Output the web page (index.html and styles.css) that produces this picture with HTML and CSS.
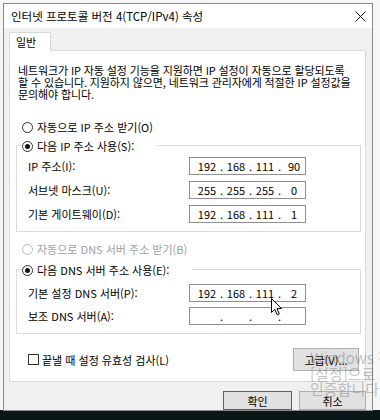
FILE: index.html
```html
<!DOCTYPE html>
<html lang="ko">

<head>
  <meta charset="UTF-8">
  <title>인터넷 프로토콜 버전 4(TCP/IPv4) 속성</title>
  <link rel="stylesheet" href="styles.css">
</head>

<body>
  <div class="dialog">
    <div class="titlebar">
      <span class="title">인터넷 프로토콜 버전 4(TCP/IPv4) 속성</span>
      <svg class="close" width="11" height="11" viewBox="0 0 11 11">
        <path d="M0.5 0.5 L10.5 10.5 M10.5 0.5 L0.5 10.5" stroke="#111" stroke-width="1" fill="none" />
      </svg>
    </div>

    <div class="body">
      <div class="tabs">
        <div class="tab">일반</div>
      </div>

      <div class="panel">
        <p class="desc">
          네트워크가 IP 자동 설정 기능을 지원하면 IP 설정이 자동으로 할당되도록<br>
          할 수 있습니다. 지원하지 않으면, 네트워크 관리자에게 적절한 IP 설정값을<br>
          문의해야 합니다.
        </p>

        <div class="radio-row first">
          <span class="radio"></span>
          <span>자동으로 IP 주소 받기(O)</span>
        </div>

        <div class="group group-ip">
          <div class="group-title">
            <span class="radio checked"></span>
            <span>다음 IP 주소 사용(S):</span>
          </div>
          <div class="fields">
            <label>IP 주소(I):</label>
            <div class="ip-box">
              <span class="seg">192</span><span class="dot">.</span><span class="seg">168</span><span class="dot">.</span><span class="seg">111</span><span class="dot">.</span><span class="seg">90</span>
            </div>
            <label>서브넷 마스크(U):</label>
            <div class="ip-box">
              <span class="seg">255</span><span class="dot">.</span><span class="seg">255</span><span class="dot">.</span><span class="seg">255</span><span class="dot">.</span><span class="seg">0</span>
            </div>
            <label>기본 게이트웨이(D):</label>
            <div class="ip-box">
              <span class="seg">192</span><span class="dot">.</span><span class="seg">168</span><span class="dot">.</span><span class="seg">111</span><span class="dot">.</span><span class="seg">1</span>
            </div>
          </div>
        </div>

        <div class="radio-row dns-auto disabled">
          <span class="radio"></span>
          <span>자동으로 DNS 서버 주소 받기(B)</span>
        </div>

        <div class="group group-dns">
          <div class="group-title">
            <span class="radio checked"></span>
            <span>다음 DNS 서버 주소 사용(E):</span>
          </div>
          <div class="fields">
            <label>기본 설정 DNS 서버(P):</label>
            <div class="ip-box">
              <span class="seg">192</span><span class="dot">.</span><span class="seg">168</span><span class="dot">.</span><span class="seg">111</span><span class="dot">.</span><span class="seg">2</span>
            </div>
            <label>보조 DNS 서버(A):</label>
            <div class="ip-box">
              <span class="seg"></span><span class="dot">.</span><span class="seg"></span><span class="dot">.</span><span class="seg"></span><span class="dot">.</span><span class="seg"></span>
            </div>
          </div>
        </div>

        <div class="check-row">
          <div class="check">
            <span class="checkbox"></span>
            <span>끝낼 때 설정 유효성 검사(L)</span>
          </div>
          <button class="btn advanced">고급(V)...</button>
        </div>
      </div>

      <div class="actions">
        <button class="btn ok">확인</button>
        <button class="btn">취소</button>
      </div>
    </div>
  </div>

  <!-- activation watermark over the dialog -->
  <div class="watermark">
    Windows 정품 인증<br>
    [설정]으로 이동하여 Windows를 정품<br>
    인증합니다.
  </div>

  <!-- mouse pointer -->
  <svg class="cursor" width="12" height="18" viewBox="0 0 12 18">
    <path d="M0.5 0.5 L0.5 14.5 L3.8 11.4 L6.2 16.8 L8.3 15.9 L6 10.6 L10.5 10.6 Z" fill="#fff" stroke="#000" stroke-width="1" stroke-linejoin="round" />
  </svg>
</body>

</html>
```

FILE: styles.css
```css
* {
  margin: 0;
  padding: 0;
  box-sizing: border-box;
}

body {
  width: 380px;
  height: 420px;
  overflow: hidden;
  position: relative;
  font-family: "Noto Sans CJK KR", "Noto Sans", sans-serif;
  font-size: 11px;
  line-height: 14px;
  color: #000;
  background: linear-gradient(to bottom, #f6f6f6 0, #f6f6f6 410px, #0b1619 410px);
}

.dialog {
  margin: 3px 0 0 3px;
  width: 370px;
  height: 408px;
  border: 1px solid #8a8a8a;
  background: #f0f0f0;
  display: flex;
  flex-direction: column;
}

.titlebar {
  height: 24px;
  background: #fff;
  display: flex;
  align-items: center;
  justify-content: space-between;
  padding: 0 6px 0 7px;
}

.title {
  font-size: 11.5px;
}

.body {
  padding: 4px 6px 0 5px;
}

.tabs {
  display: flex;
}

.tab {
  width: 42px;
  height: 19px;
  padding: 2px 0 0 6px;
  background: #fff;
  border: 1px solid #d9d9d9;
  border-bottom: none;
  margin-bottom: -1px;
  position: relative;
  z-index: 1;
}

.panel {
  height: 332px;
  background: #fff;
  border: 1px solid #d9d9d9;
  padding-top: 13px;
}

.desc {
  padding-left: 8px;
  line-height: 12px;
  letter-spacing: -0.12px;
  white-space: nowrap;
}

.radio-row {
  display: flex;
  align-items: center;
  gap: 4px;
  height: 14px;
  padding-left: 12px;
}

.radio-row.first {
  margin-top: 20px;
}

.radio-row.dns-auto {
  margin-top: 10px;
}

.disabled {
  color: #a0a0a0;
}

.radio {
  width: 11px;
  height: 11px;
  border: 1px solid #333;
  border-radius: 50%;
  background: #fff;
  display: flex;
  align-items: center;
  justify-content: center;
  flex-shrink: 0;
}

.disabled .radio {
  border-color: #bcbcbc;
}

.radio.checked::after {
  content: "";
  width: 5px;
  height: 5px;
  border-radius: 50%;
  background: #111;
}

.group {
  margin-left: 6px;
  width: 345px;
  border: 1px solid #dcdcdc;
  padding-bottom: 8px;
}

.group-ip {
  margin-top: 11px;
}

.group-dns {
  margin-top: 13px;
}

.group-title {
  display: flex;
  align-items: center;
  gap: 4px;
  width: fit-content;
  height: 14px;
  margin: -7px 0 0 5px;
  padding-right: 23px;
  background: #fff;
}

.fields {
  display: grid;
  grid-template-columns: 161px 117px;
  align-items: center;
  row-gap: 6px;
  padding-left: 11px;
}

.group-ip .fields {
  margin-top: 4px;
}

.group-dns .fields {
  margin-top: 7px;
  row-gap: 5px;
}

.ip-box {
  height: 18px;
  border: 1px solid #8f8f8f;
  display: flex;
  align-items: center;
  padding-left: 6px;
}

.seg {
  width: 22px;
  text-align: center;
}

.dot {
  width: 7px;
  text-align: center;
}

.check-row {
  display: flex;
  align-items: center;
  justify-content: space-between;
  margin-top: 14px;
  padding: 0 6px 0 18px;
}

.check {
  display: flex;
  align-items: center;
  gap: 3px;
}

.checkbox {
  width: 11px;
  height: 11px;
  border: 1px solid #333;
  background: #fff;
}

.btn {
  font: inherit;
  color: #000;
  background: #e1e1e1;
  border: 1px solid #adadad;
  height: 19px;
  width: 67px;
}

.btn.advanced {
  width: 66px;
  height: 23px;
}

.btn.ok {
  width: 69px;
  border-color: #0078d7;
}

.actions {
  display: flex;
  justify-content: flex-end;
  gap: 7px;
  margin-top: 9px;
}

.watermark {
  position: absolute;
  left: 310px;
  top: 350px;
  font-size: 15px;
  line-height: 15.5px;
  white-space: nowrap;
  color: rgba(110, 110, 110, 0.42);
}

.cursor {
  position: absolute;
  left: 271px;
  top: 298px;
}
```
